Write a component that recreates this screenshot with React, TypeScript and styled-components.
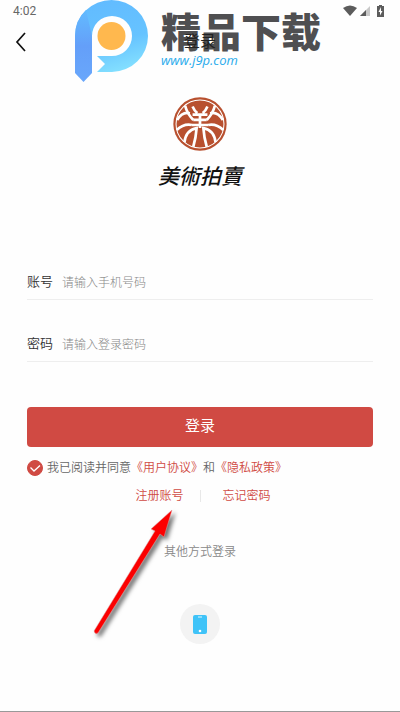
import React, { useState } from "react";
import styled, { createGlobalStyle } from "styled-components";

const GlobalStyle = createGlobalStyle`
  * { box-sizing: border-box; }
  body {
    margin: 0;
    background: #fefefe;
    font-family: Roboto, "Noto Sans CJK SC", sans-serif;
  }
`;

const Screen = styled.div`
  position: relative;
  display: flex;
  flex-direction: column;
  min-height: 100vh;
  border-bottom: 1px solid #999;
`;

const StatusBar = styled.div`
  display: flex;
  align-items: center;
  justify-content: space-between;
  height: 22px;
  padding: 0 13px;
  color: #666;
  font-size: 12px;
`;

const StatusIcons = styled.div`
  display: flex;
  align-items: center;
  gap: 3px;
`;

const Header = styled.header`
  display: grid;
  grid-template-columns: 42px 1fr 42px;
  align-items: center;
  height: 40px;
`;

const BackButton = styled.button`
  display: flex;
  align-items: center;
  justify-content: center;
  height: 40px;
  padding: 0;
  border: 0;
  background: none;
`;

const Title = styled.h1`
  position: relative;
  z-index: 1;
  margin: 0;
  color: #222;
  font-size: 16px;
  font-weight: 400;
  line-height: 24px;
  text-align: center;
`;

const Watermark = styled.div`
  position: absolute;
  top: 0;
  left: 75px;
  display: flex;
  gap: 12px;
  pointer-events: none;
`;

const WatermarkText = styled.div`
  display: flex;
  flex-direction: column;
  padding-top: 8px;
`;

const WatermarkName = styled.span`
  color: #4f4f51;
  font-family: "Noto Sans CJK SC", sans-serif;
  font-size: 40px;
  font-weight: 900;
  line-height: 44px;
  white-space: nowrap;
`;

const WatermarkSite = styled.span`
  color: #29abec;
  font-family: "Open Sans", sans-serif;
  font-size: 13px;
  font-style: italic;
  line-height: 16px;
`;

const Brand = styled.div`
  display: flex;
  flex-direction: column;
  align-items: center;
  gap: 8px;
  padding-top: 35px;
`;

const BrandName = styled.span`
  color: #111;
  font-family: "Noto Sans CJK TC", sans-serif;
  font-size: 21px;
  font-style: italic;
  font-weight: 500;
  line-height: 32px;
`;

const Form = styled.form`
  display: flex;
  flex-direction: column;
  padding: 73px 27px 0;
`;

const Field = styled.div`
  display: flex;
  align-items: center;
  gap: 9px;
  height: 36px;
  margin-bottom: 26px;
  border-bottom: 1px solid #eee;
`;

const Label = styled.label`
  color: #333;
  font-size: 13px;
  font-weight: 350;
  line-height: 20px;
`;

const Input = styled.input`
  flex: 1;
  min-width: 0;
  padding: 2px 0 0;
  border: 0;
  outline: 0;
  background: none;
  color: #333;
  font-family: inherit;
  font-size: 12px;
  font-weight: 300;
  line-height: 20px;
  &::placeholder { color: #888; opacity: 1; }
`;

const Submit = styled.button`
  height: 40px;
  margin-top: 19px;
  border: 0;
  border-radius: 4px;
  background: #d04a43;
  color: #fff;
  font-family: inherit;
  font-size: 15px;
  line-height: 20px;
  padding: 0 0 2px;
`;

const Agreement = styled.div`
  display: flex;
  align-items: center;
  gap: 4px;
  height: 20px;
  margin-top: 11px;
  color: #666;
  font-size: 12px;
  font-weight: 350;
  line-height: 16px;
  white-space: nowrap;
`;

const Check = styled.input`
  appearance: none;
  flex: none;
  width: 16px;
  height: 16px;
  margin: 0;
  border: 1px solid #d04a43;
  border-radius: 50%;
  &:checked {
    background: #d04a43 url("data:image/svg+xml,%3Csvg xmlns='http://www.w3.org/2000/svg' viewBox='0 0 14 14'%3E%3Cpath d='M2.500 6.500l3.500 3.500 6-5.500' fill='none' stroke='white' stroke-width='1.300'/%3E%3C/svg%3E") center / 14px no-repeat;
  }
`;

const Link = styled.a`
  color: #d04a43;
  text-decoration: none;
`;

const AccountLinks = styled.nav`
  display: grid;
  grid-template-columns: 1fr 1px 1fr;
  column-gap: 16px;
  align-items: center;
  height: 20px;
  margin-top: 8px;
  font-size: 12px;
  font-weight: 350;
  line-height: 16px;
`;

const RegisterLink = styled(Link)`
  text-align: right;
`;

const ForgotLink = styled(Link)`
  padding-left: 6px;
`;

const Divider = styled.span`
  height: 12px;
  background: #e8e8e8;
`;

const Others = styled.section`
  display: flex;
  flex-direction: column;
  align-items: center;
  gap: 42px;
  padding-top: 36px;
`;

const OthersTitle = styled.h2`
  margin: 0;
  color: #888;
  font-size: 12px;
  font-weight: 350;
  line-height: 20px;
`;

const PhoneButton = styled.button`
  display: flex;
  align-items: center;
  justify-content: center;
  width: 40px;
  height: 40px;
  padding: 0;
  border: 0;
  border-radius: 50%;
  background: #f3f3f3;
`;

const Pointer = styled.svg`
  position: absolute;
  top: 505px;
  left: 90px;
  pointer-events: none;
  filter: drop-shadow(3px 3px 2px rgba(0, 0, 0, 0.55));
`;

function StatusGlyphs() {
  return (
    <StatusIcons>
      <svg width="14" height="12" viewBox="0 0 14 12">
        <path d="M0 3Q7-2 14 3L7 11Z" fill="#5c5c5c" />
      </svg>
      <svg width="11" height="12" viewBox="0 0 11 12">
        <path d="M0 11L10 1V11Z" fill="#c9c9c9" />
        <path d="M0 11L6 5V11Z" fill="#5c5c5c" />
      </svg>
      <svg width="13" height="13" viewBox="0 0 13 13">
        <path d="M5 0h3v1h2v11H3V1h2Z" fill="#5c5c5c" />
        <path d="M7 2L4.500 7H6v3.500L8.500 6H7Z" fill="#fff" />
      </svg>
    </StatusIcons>
  );
}

function SiteLogo() {
  return (
    <svg width="74" height="82" viewBox="0 0 74 82">
      <defs>
        <linearGradient id="bow" x1="0.300" y1="0" x2="0.600" y2="1">
          <stop offset="0" stopColor="#62bbff" />
          <stop offset="0.600" stopColor="#66c3ff" />
          <stop offset="1" stopColor="#84e0ff" />
        </linearGradient>
        <linearGradient id="stem" x1="0" y1="0" x2="0" y2="1">
          <stop offset="0" stopColor="#62bbff" />
          <stop offset="0.500" stopColor="#649ff9" />
          <stop offset="1" stopColor="#69a7fb" />
        </linearGradient>
      </defs>
      <path d="M0 36A36.500 36 0 0 1 73 36A36.500 36 0 0 1 37 72H22L30 64L22 56H37A20 20 0 1 0 17 36L0 46Z" fill="url(#bow)" />
      <path d="M0 36Q0 20 11 10L17 36V73L8.500 82L0 73Z" fill="url(#stem)" />
      <circle cx="36.500" cy="36" r="14" fill="#ffb84e" />
    </svg>
  );
}

function Emblem() {
  return (
    <svg width="54" height="54" viewBox="0 0 160 160">
      <circle cx="80" cy="80" r="79" fill="#b8502f" />
      <g fill="none" stroke="#fff" strokeWidth="8">
        <circle cx="80" cy="80" r="71" strokeWidth="3" />
        <path d="M58 28Q64 42 72 48M102 28Q96 42 88 48M58 52H102M60 68H100M56 83H104M80 48V92" />
        <path d="M36 26Q42 50 60 68M124 26Q118 50 100 68" />
        <path d="M12 68Q28 42 50 48M148 68Q132 42 110 48" />
        <path d="M11 98Q32 78 56 83M149 98Q128 78 104 83" />
        <path d="M34 134Q38 98 70 92Q68 120 60 148M126 134Q122 98 90 92Q92 120 100 148" />
      </g>
    </svg>
  );
}

export default function App() {
  const [agreed, setAgreed] = useState(true);
  return (
    <>
      <GlobalStyle />
      <Screen>
        <StatusBar>
          <span>4:02</span>
          <StatusGlyphs />
        </StatusBar>
        <Header>
          <BackButton aria-label="返回">
            <svg width="12" height="20" viewBox="0 0 12 20">
              <path d="M10 1L2 10L10 19" fill="none" stroke="#111" strokeWidth="1.700" />
            </svg>
          </BackButton>
          <Title>登录</Title>
        </Header>
        <Brand>
          <Emblem />
          <BrandName>美術拍賣</BrandName>
        </Brand>
        <Form onSubmit={(e) => e.preventDefault()}>
          <Field>
            <Label htmlFor="account">账号</Label>
            <Input id="account" type="tel" placeholder="请输入手机号码" />
          </Field>
          <Field>
            <Label htmlFor="password">密码</Label>
            <Input id="password" type="password" placeholder="请输入登录密码" />
          </Field>
          <Submit type="submit">登录</Submit>
          <Agreement>
            <Check id="agree" type="checkbox" checked={agreed} onChange={(e) => setAgreed(e.target.checked)} />
            <span>
              <label htmlFor="agree">我已阅读并同意</label>
              <Link href="#terms">《用户协议》</Link>和<Link href="#privacy">《隐私政策》</Link>
            </span>
          </Agreement>
          <AccountLinks>
            <RegisterLink href="#register">注册账号</RegisterLink>
            <Divider />
            <ForgotLink href="#forgot">忘记密码</ForgotLink>
          </AccountLinks>
        </Form>
        <Others>
          <OthersTitle>其他方式登录</OthersTitle>
          <PhoneButton aria-label="手机登录">
            <svg width="14" height="19" viewBox="0 0 14 19">
              <rect width="14" height="19" rx="2" fill="#3fc3f8" />
              <path d="M5 2H9" stroke="#c5edff" strokeWidth="1.200" />
              <circle cx="7" cy="16" r="1.300" fill="#fff" />
            </svg>
          </PhoneButton>
        </Others>
        <Watermark>
          <SiteLogo />
          <WatermarkText>
            <WatermarkName>精品下载</WatermarkName>
            <WatermarkSite>www.j9p.com</WatermarkSite>
          </WatermarkText>
        </Watermark>
        <Pointer width="90" height="132" viewBox="0 0 90 132">
          <path d="M82 5L74 32L70 29L8 128Q5 130 4 126L65 26L61 24Z" fill="#fb0000" stroke="#d9a0a0" strokeWidth="0.500" />
        </Pointer>
      </Screen>
    </>
  );
}
